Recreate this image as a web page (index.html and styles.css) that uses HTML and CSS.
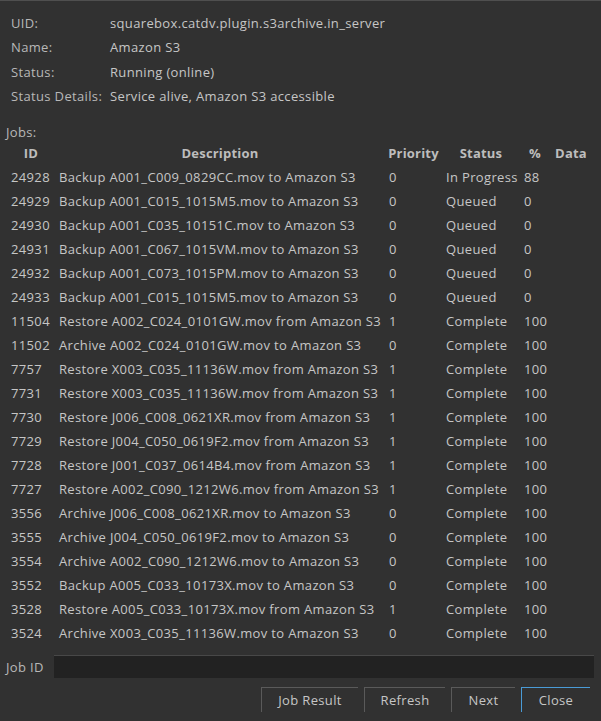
FILE: index.html
```html
<!DOCTYPE html>
<html>
<head>
<meta charset="utf-8">
<link rel="stylesheet" href="styles.css">
</head>
<body>
<div class="dialog">
  <div class="info">
    <div class="label">UID:</div><div class="value">squarebox.catdv.plugin.s3archive.in_server</div>
    <div class="label">Name:</div><div class="value">Amazon S3</div>
    <div class="label">Status:</div><div class="value">Running (online)</div>
    <div class="label">Status Details:</div><div class="value">Service alive, Amazon S3 accessible</div>
  </div>
  <div class="jobs-label">Jobs:</div>
  <table class="jobs">
    <colgroup>
      <col class="c-id"><col class="c-desc"><col class="c-pri"><col class="c-status"><col class="c-pct"><col class="c-data">
    </colgroup>
    <thead>
      <tr><th>ID</th><th>Description</th><th>Priority</th><th>Status</th><th>%</th><th>Data</th></tr>
    </thead>
    <tbody>
      <tr><td>24928</td><td>Backup A001_C009_0829CC.mov to Amazon S3</td><td>0</td><td>In Progress</td><td>88</td><td></td></tr>
      <tr><td>24929</td><td>Backup A001_C015_1015M5.mov to Amazon S3</td><td>0</td><td>Queued</td><td>0</td><td></td></tr>
      <tr><td>24930</td><td>Backup A001_C035_10151C.mov to Amazon S3</td><td>0</td><td>Queued</td><td>0</td><td></td></tr>
      <tr><td>24931</td><td>Backup A001_C067_1015VM.mov to Amazon S3</td><td>0</td><td>Queued</td><td>0</td><td></td></tr>
      <tr><td>24932</td><td>Backup A001_C073_1015PM.mov to Amazon S3</td><td>0</td><td>Queued</td><td>0</td><td></td></tr>
      <tr><td>24933</td><td>Backup A001_C015_1015M5.mov to Amazon S3</td><td>0</td><td>Queued</td><td>0</td><td></td></tr>
      <tr><td>11504</td><td>Restore A002_C024_0101GW.mov from Amazon S3</td><td>1</td><td>Complete</td><td>100</td><td></td></tr>
      <tr><td>11502</td><td>Archive A002_C024_0101GW.mov to Amazon S3</td><td>0</td><td>Complete</td><td>100</td><td></td></tr>
      <tr><td>7757</td><td>Restore X003_C035_11136W.mov from Amazon S3</td><td>1</td><td>Complete</td><td>100</td><td></td></tr>
      <tr><td>7731</td><td>Restore X003_C035_11136W.mov from Amazon S3</td><td>1</td><td>Complete</td><td>100</td><td></td></tr>
      <tr><td>7730</td><td>Restore J006_C008_0621XR.mov from Amazon S3</td><td>1</td><td>Complete</td><td>100</td><td></td></tr>
      <tr><td>7729</td><td>Restore J004_C050_0619F2.mov from Amazon S3</td><td>1</td><td>Complete</td><td>100</td><td></td></tr>
      <tr><td>7728</td><td>Restore J001_C037_0614B4.mov from Amazon S3</td><td>1</td><td>Complete</td><td>100</td><td></td></tr>
      <tr><td>7727</td><td>Restore A002_C090_1212W6.mov from Amazon S3</td><td>1</td><td>Complete</td><td>100</td><td></td></tr>
      <tr><td>3556</td><td>Archive J006_C008_0621XR.mov to Amazon S3</td><td>0</td><td>Complete</td><td>100</td><td></td></tr>
      <tr><td>3555</td><td>Archive J004_C050_0619F2.mov to Amazon S3</td><td>0</td><td>Complete</td><td>100</td><td></td></tr>
      <tr><td>3554</td><td>Archive A002_C090_1212W6.mov to Amazon S3</td><td>0</td><td>Complete</td><td>100</td><td></td></tr>
      <tr><td>3552</td><td>Backup A005_C033_10173X.mov to Amazon S3</td><td>0</td><td>Complete</td><td>100</td><td></td></tr>
      <tr><td>3528</td><td>Restore A005_C033_10173X.mov from Amazon S3</td><td>1</td><td>Complete</td><td>100</td><td></td></tr>
      <tr><td>3524</td><td>Archive X003_C035_11136W.mov to Amazon S3</td><td>0</td><td>Complete</td><td>100</td><td></td></tr>
    </tbody>
  </table>
  <div class="jobid-row">
    <label class="jobid-label">Job ID</label>
    <div class="jobid-input"></div>
  </div>
  <div class="buttons">
    <div class="btn btn-result">Job Result</div>
    <div class="btn btn-refresh">Refresh</div>
    <div class="btn btn-next">Next</div>
    <div class="btn btn-close">Close</div>
  </div>
</div>
</body>
</html>
```

FILE: styles.css
```css
html, body {
  margin: 0;
  padding: 0;
  background: #313131;
}
body {
  font-family: "Open Sans", "DejaVu Sans", sans-serif;
  font-size: 13px;
  letter-spacing: 0.35px;
  color: #c6c6c6;
  width: 601px;
  height: 721px;
  overflow: hidden;
}
.dialog {
  border-top: 1px solid #4f4f4f;
  height: 720px;
}
.info {
  display: grid;
  grid-template-columns: 99px auto;
  grid-auto-rows: 24.3px;
  align-items: center;
  padding: 10px 0 0 11px;
}
.label {
  color: #b8b8b8;
}
.value {
  color: #c6c6c6;
}
.jobs-label {
  margin: 16px 0 0 6px;
  height: 17px;
  line-height: 17px;
  color: #b8b8b8;
}
.jobs {
  margin-left: 7px;
  border-collapse: collapse;
  table-layout: fixed;
  width: 585px;
}
.c-id { width: 48px; }
.c-desc { width: 330px; }
.c-pri { width: 57px; }
.c-status { width: 78px; }
.c-pct { width: 30px; }
.c-data { width: 42px; }
.jobs th {
  height: 24px;
  padding: 0;
  font-weight: bold;
  letter-spacing: 0.2px;
  text-align: center;
  color: #bdbdbd;
  white-space: nowrap;
}
.jobs td {
  height: 24px;
  padding: 0 0 0 4px;
  white-space: nowrap;
  overflow: hidden;
  color: #c6c6c6;
}
.jobid-row {
  display: flex;
  align-items: center;
  margin-top: 10px;
  height: 23px;
}
.jobid-label {
  width: 48px;
  padding-left: 6px;
  color: #b8b8b8;
}
.jobid-input {
  width: 540px;
  height: 22px;
  background: #222222;
  border-top: 1px solid #484848;
}
.buttons {
  display: flex;
  justify-content: flex-end;
  gap: 6px;
  margin-top: 9px;
  padding-right: 11px;
}
.btn {
  height: 25px;
  line-height: 24px;
  text-align: center;
  color: #c6c6c6;
  border-top: 1px solid #5a5a5a;
  border-left: 1px solid #5a5a5a;
  box-sizing: border-box;
}
.btn-result { width: 97px; }
.btn-refresh { width: 81px; }
.btn-next { width: 64px; }
.btn-close {
  width: 69px;
  border-top-color: #4a9bd6;
  border-left-color: #4a9bd6;
}
```
